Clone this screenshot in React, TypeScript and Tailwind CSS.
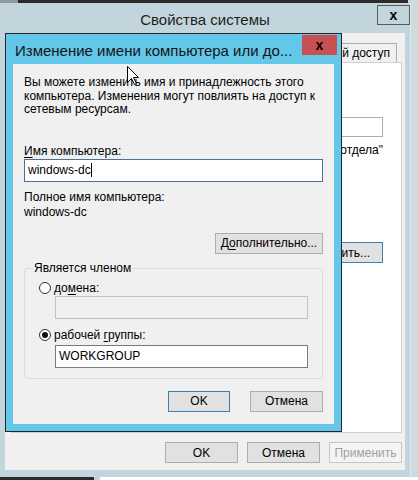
import React from "react";

const font = { fontFamily: '"Liberation Sans", Arial, sans-serif' };

// underline one letter, the way Windows marks access keys
const Key = ({ children }: { children: React.ReactNode }) => (
  <span className="underline underline-offset-[2px]">{children}</span>
);

const Radio = ({ checked }: { checked?: boolean }) => (
  <span className="w-[12px] h-[12px] rounded-full border border-[#333] bg-white flex items-center justify-center flex-shrink-0">
    {checked && <span className="w-[6px] h-[6px] rounded-full bg-[#111]" />}
  </span>
);

const WinButton = ({
  children,
  w,
  primary,
  disabled,
}: {
  children: React.ReactNode;
  w: string;
  primary?: boolean;
  disabled?: boolean;
}) => (
  <div
    className={`${w} h-[21px] flex items-center justify-center text-[12px] border ${
      disabled
        ? "border-[#c6c6c6] bg-[#f4f4f4] text-[#a0a0a0]"
        : primary
          ? "border-[#3c7fb1] bg-[#e1e1e1] text-black"
          : "border-[#adadad] bg-[#e1e1e1] text-black"
    }`}
  >
    {children}
  </div>
);

const Cursor = () => (
  <svg
    className="absolute left-[127px] top-[66px]"
    width="13"
    height="20"
    viewBox="0 0 13 20"
  >
    <path
      d="M0.5 0.5 L0.5 16.5 L4.5 12.5 L7.5 18.5 L9.5 17.5 L6.5 11.5 L11.5 11.5 Z"
      fill="#fff"
      stroke="#000"
      strokeWidth="1"
    />
  </svg>
);

export default function App() {
  return (
    <div
      className="relative w-[418px] h-[480px] overflow-hidden flex flex-col bg-[#cdd9de]"
      style={font}
    >
      {/* strip above the window */}
      <div className="h-[3px] flex">
        <div className="w-[18px] bg-[#8c9aa0]" />
        <div className="w-[390px] bg-[#2b2b2b]" />
        <div className="flex-1 bg-[#cdd9de]" />
      </div>

      <div className="h-[474px] flex">
        {/* System properties window */}
        <div className="w-[410px] h-full bg-[#c3d5dc] flex flex-col">
          <div className="relative h-[30px] flex items-center justify-center">
            <span className="text-[15px] text-[#1e1e1e] mt-[5px]">Свойства системы</span>
            <div className="absolute right-0 top-[2px] w-[33px] h-[20px] border border-[#5a5a5a] flex items-center justify-center">
              <span className="text-[14px] font-bold leading-none text-black">x</span>
            </div>
          </div>

          <div className="mx-[5px] flex-1 mb-[7px] bg-[#f0f0f0] flex flex-col pt-[10px] pl-[6px] pr-[3px]">
            <div className="h-[19px] flex justify-end pr-[5px]">
              <div className="h-[19px] px-[6px] border border-b-0 border-[#adadad] bg-[#f0f0f0] flex items-center text-[12px] text-black whitespace-nowrap">
                Удаленный доступ
              </div>
            </div>

            <div className="h-[371px] border border-[#d0d0d0] bg-white flex flex-col items-end pr-[18px]">
              <div className="mt-[54px] w-[280px] h-[20px] border border-[#abadb3] bg-white" />
              <div className="mt-[6px] text-[12px] leading-[14px] text-black whitespace-nowrap">
                "Сервер ИТ-отдела"
              </div>
              <div className="mt-[85px] w-[90px] h-[21px] border border-[#3c7fb1] bg-[#e1e1e1] flex items-center justify-center text-[12px]">
                Изменить...
              </div>
            </div>

            <div className="mt-[9px] flex justify-end gap-[9px]">
              <WinButton w="w-[73px]">OK</WinButton>
              <WinButton w="w-[73px]">Отмена</WinButton>
              <WinButton w="w-[73px]" disabled>
                Применить
              </WinButton>
            </div>
          </div>
        </div>
        <div className="flex-1 bg-[#cfdadf] border-l border-[#e2e8ea]" />
      </div>

      <div className="h-[3px] flex">
        <div className="w-[94px] bg-[#2b2b2b]" />
        <div className="w-[6px] bg-[#c2d5dc]" />
        <div className="flex-1 bg-white" />
      </div>

      {/* Rename dialog, on top of the properties window */}
      <div className="absolute left-[5px] top-[33px] w-[337px] h-[399px] border border-[#262626] bg-[#62c7e9] flex flex-col">
        <div className="relative h-[30px] flex items-center pl-[9px]">
          <span className="text-[15px] text-[#141414] mt-[5px] whitespace-nowrap">
            Изменение имени компьютера или до...
          </span>
          <div className="absolute right-[4px] top-[1px] w-[35px] h-[20px] bg-[#c75050] flex items-center justify-center">
            <span className="text-[14px] font-bold leading-none text-black">x</span>
          </div>
        </div>

        <div className="mx-[7px] mb-[7px] flex-1 bg-[#f0f0f0] px-[11px] flex flex-col text-[12px] text-black">
          <p className="mt-[12px] leading-[13.5px]">
            Вы можете изменить имя и принадлежность этого компьютера. Изменения могут повлиять на
            доступ к сетевым ресурсам.
          </p>

          <div className="mt-[27px] leading-[14px]">
            <Key>И</Key>мя компьютера:
          </div>
          <div className="mt-[1px] h-[23px] border border-[#4d7196] bg-white flex items-center pl-[3px]">
            windows-dc<span className="w-px h-[14px] bg-black" />
          </div>

          <div className="mt-[8px] leading-[14px]">Полное имя компьютера:</div>
          <div className="leading-[14px] mt-px">windows-dc</div>

          <div className="mt-[14px] self-end">
            <WinButton w="w-[108px]">
              <span>
                Д<Key>о</Key>полнительно...
              </span>
            </WinButton>
          </div>

          {/* membership group */}
          <div className="relative mt-[14px] h-[111px] border border-[#dcdcdc] rounded-[3px] px-[14px] flex flex-col">
            <span className="absolute left-[8px] -top-[8px] px-[1px] bg-[#f0f0f0] leading-[14px]">
              Является членом
            </span>
            <div className="mt-[12px] h-[14px] flex items-center gap-[3px] leading-[14px]">
              <Radio />
              <span>
                до<Key>м</Key>ена:
              </span>
            </div>
            <div className="mt-[1px] ml-[16px] h-[23px] border border-[#c2c2c2] bg-[#f0f0f0]" />
            <div className="mt-[9px] h-[14px] flex items-center gap-[3px] leading-[14px]">
              <Radio checked />
              <span>
                рабочей <Key>г</Key>руппы:
              </span>
            </div>
            <div className="mt-[3px] ml-[16px] h-[23px] border border-[#7a7a7a] bg-white flex items-center pl-[3px]">
              WORKGROUP
            </div>
          </div>

          <div className="mt-[12px] flex justify-end gap-[20px]">
            <WinButton w="w-[62px]" primary>
              OK
            </WinButton>
            <WinButton w="w-[73px]">Отмена</WinButton>
          </div>
        </div>
      </div>

      <Cursor />
    </div>
  );
}
